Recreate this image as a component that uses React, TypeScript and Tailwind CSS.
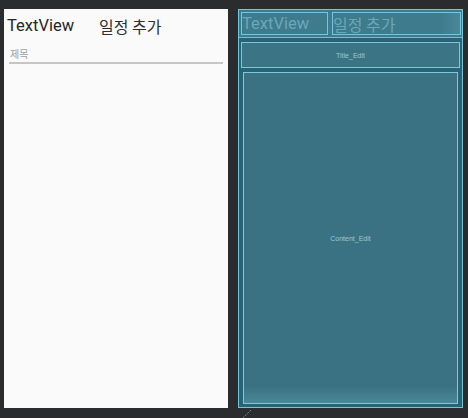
const roboto = { fontFamily: "Roboto, 'Noto Sans CJK KR', sans-serif" }
const kr = { fontFamily: "'Noto Sans CJK KR', Roboto, sans-serif" }
const tiny = { fontFamily: "'Liberation Sans', Arial, sans-serif" }

function PhonePreview() {
    return (
        <div className="w-[224px] h-[399px] bg-[#fafafa] flex flex-col">
            <div className="flex items-center h-[31px] pl-[3px] pt-[3px]">
                <span className="w-[92px] text-[16.5px] leading-none text-[#262626]" style={roboto}>TextView</span>
                <span className="text-[16px] leading-none text-[#2e2e2e]" style={kr}>일정 추가</span>
            </div>
            <div className="ml-[5px] mr-[5px] mt-[9px]">
                <div className="pl-[1px] text-[10px] leading-none text-[#a0a0a0]" style={kr}>제목</div>
                <div className="h-[2px] bg-[#c6c6c6] mt-[3px]" />
            </div>
        </div>
    )
}

function BlueprintPreview() {
    return (
        <div className="flex flex-col">
            <div className="w-[225px] h-[400px] border border-[#74c5dc] bg-[#2a6373] flex flex-col">
                <div className="h-[28px] bg-[#3e7b8c] border-b border-[#6fbfd6] flex pl-[2px] pr-[1px] pt-[2px] pb-[2px] gap-[4px]">
                    <div className="w-[87px] h-[23px] border border-[#78c4da] flex items-center pt-[1px]">
                        <span className="text-[16.5px] leading-none text-[#6aa8bb]" style={roboto}>TextView</span>
                    </div>
                    <div className="flex-1 h-[23px] border border-[#78c4da] flex items-center pt-[1px] bg-gradient-to-r from-[#3e7b8c] from-85% to-[#4a8797]">
                        <span className="text-[16px] leading-none text-[#6aa8bb]" style={kr}>일정 추가</span>
                    </div>
                </div>
                <div className="mt-[4px] mx-[2px] h-[26px] border border-[#78c7dd] bg-[#3b7485] flex items-center justify-center">
                    <span className="text-[7px] leading-none text-[#8fcbdf]" style={tiny}>Title_Edit</span>
                </div>
                <div className="mt-[4px] mx-[4px] h-[332px] border border-[#7ccadf] bg-gradient-to-b from-[#3a7284] from-95% to-[#4a8797] flex items-center justify-center">
                    <span className="text-[7px] leading-none text-[#8fcbdf]" style={tiny}>Content_Edit</span>
                </div>
            </div>
            <svg width="12" height="9" viewBox="0 0 12 9" className="mt-[1px] ml-[4px]">
                <line x1="1" y1="9" x2="9" y2="1" stroke="#8a8a8a" strokeWidth="1" strokeDasharray="1.5 1" />
            </svg>
        </div>
    )
}

export default function App() {
    return (
        <div className="w-[468px] h-[418px] bg-[#2b2c2e] flex pt-[9px] pl-[4px] gap-[10px] overflow-hidden">
            <PhonePreview />
            <BlueprintPreview />
        </div>
    )
}
